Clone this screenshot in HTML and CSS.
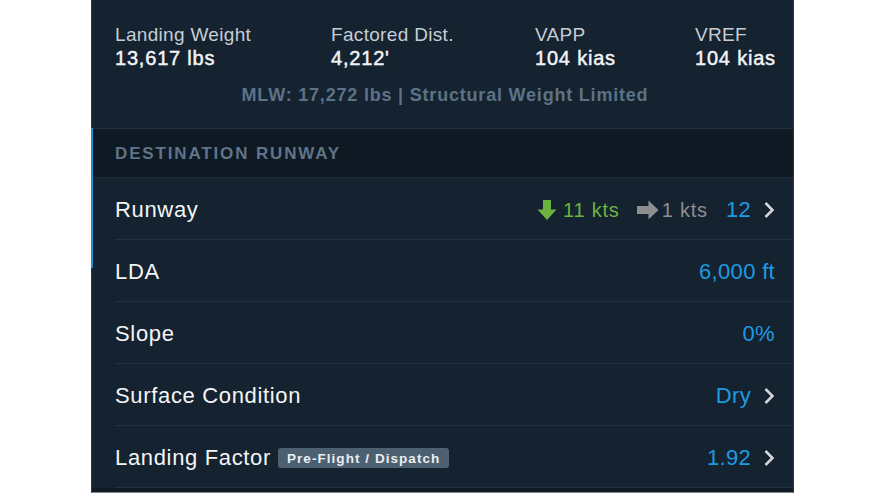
FILE: index.html
```html
<!DOCTYPE html>
<html>
<head>
<meta charset="utf-8">
<link rel="stylesheet" href="styles.css">
</head>
<body>
<div class="panel">
  <div class="accent"></div>
  <section class="stats">
    <div class="stat-grid">
      <div class="stat"><div class="stat-label">Landing Weight</div><div class="stat-value">13,617 lbs</div></div>
      <div class="stat"><div class="stat-label">Factored Dist.</div><div class="stat-value">4,212'</div></div>
      <div class="stat"><div class="stat-label">VAPP</div><div class="stat-value">104 kias</div></div>
      <div class="stat"><div class="stat-label">VREF</div><div class="stat-value">104 kias</div></div>
    </div>
    <div class="mlw">MLW: 17,272 lbs | Structural Weight Limited</div>
  </section>
  <div class="section-header">DESTINATION RUNWAY</div>
  <div class="rows">
    <div class="row">
      <div class="row-label">Runway</div>
      <div class="row-right">
        <span class="wind green">
          <svg class="arrow arrow-down" viewBox="0 0 20 22"><path d="M6 1h8v9.5h5.5l-9.5 10.5-9.5-10.5h5.5z" fill="#6cb23f"/></svg>11 kts</span>
        <span class="wind gray">
          <svg class="arrow arrow-right" viewBox="0 0 23 20"><path d="M1 6h11.5v-5.5l10 9.5-10 9.5v-5.5h-11.5z" fill="#8e8e8e"/></svg>1 kts</span>
        <span class="value">12</span>
        <svg class="chev" viewBox="0 0 12 18"><path d="M2.5 2l7 7-7 7" fill="none" stroke="#d3d7db" stroke-width="2.5"/></svg>
      </div>
    </div>
    <div class="row">
      <div class="row-label">LDA</div>
      <div class="row-right"><span class="value">6,000 ft</span></div>
    </div>
    <div class="row">
      <div class="row-label">Slope</div>
      <div class="row-right"><span class="value">0%</span></div>
    </div>
    <div class="row">
      <div class="row-label">Surface Condition</div>
      <div class="row-right"><span class="value">Dry</span>
        <svg class="chev" viewBox="0 0 12 18"><path d="M2.5 2l7 7-7 7" fill="none" stroke="#d3d7db" stroke-width="2.5"/></svg></div>
    </div>
    <div class="row">
      <div class="row-label">Landing Factor <span class="badge">Pre-Flight / Dispatch</span></div>
      <div class="row-right"><span class="value">1.92</span>
        <svg class="chev" viewBox="0 0 12 18"><path d="M2.5 2l7 7-7 7" fill="none" stroke="#d3d7db" stroke-width="2.5"/></svg></div>
    </div>
  </div>
  <div class="footer-strip"></div>
</div>
</body>
</html>
```
FILE: styles.css
```css
* { box-sizing: border-box; }
html, body { margin: 0; padding: 0; background: #ffffff; }
body {
  font-family: "Liberation Sans", Arial, Helvetica, sans-serif;
  letter-spacing: 0.02em;
  height: 500px;
  overflow: hidden;
}
.panel {
  position: relative;
  margin-left: 91px;
  width: 703px;
  height: 493px;
  background: #152230;
  border-left: 1px solid #2a3847;
  border-right: 1px solid #2a3a49;
  border-bottom: 1px solid #7d868e;
  display: flex;
  flex-direction: column;
}
.accent {
  position: absolute;
  left: -1px;
  top: 128px;
  width: 2px;
  height: 140px;
  background: #1b8fd2;
}
.stats {
  height: 129px;
  padding: 24px 0 0 23px;
  border-bottom: 1px solid #223140;
}
.stat-grid {
  display: grid;
  grid-template-columns: 216px 204px 160px auto;
}
.stat-label {
  font-size: 19px;
  line-height: 22px;
  color: #c6cdd4;
}
.stat-value {
  font-size: 20px;
  line-height: 25px;
  font-weight: 400;
  letter-spacing: 0.04em;
  -webkit-text-stroke: 0.45px currentColor;
  color: #f3f5f7;
}
.mlw {
  margin-top: 14px;
  padding-right: 18px;
  text-align: center;
  font-size: 18px;
  line-height: 21px;
  font-weight: 700;
  color: #5d7286;
  letter-spacing: 0.8px;
}
.section-header {
  height: 49px;
  display: flex;
  align-items: center;
  padding: 2px 0 0 23px;
  background: #0f1923;
  border-bottom: 1px solid #1e2c3a;
  font-size: 17px;
  font-weight: 700;
  letter-spacing: 1.85px;
  color: #5f7488;
}
.rows { margin-left: 23px; }
.row {
  height: 62px;
  display: flex;
  align-items: center;
  justify-content: space-between;
  padding: 3px 18px 0 0;
  border-bottom: 1px solid #223141;
}
.row-label {
  font-size: 22px;
  letter-spacing: 0.03em;
  color: #f3f5f7;
  display: flex;
  align-items: center;
}
.row-right {
  display: flex;
  align-items: center;
}
.value {
  font-size: 22px;
  color: #1d9be2;
}
.wind {
  display: flex;
  align-items: center;
  font-size: 20px;
  letter-spacing: 0.04em;
}
.green { color: #6cb23f; margin-right: 16px; }
.gray { color: #8e8e8e; margin-right: 18px; }
.arrow-down { width: 20px; height: 22px; margin-right: 6px; }
.arrow-right { width: 23px; height: 20px; margin-right: 3px; }
.chev { width: 12px; height: 18px; margin-left: 12px; }
.badge {
  margin-left: 7px;
  height: 20px;
  padding: 0 9px;
  border-radius: 3px;
  background: #4d6072;
  color: #e9edf0;
  font-size: 13.5px;
  font-weight: 700;
  letter-spacing: 1.05px;
  display: inline-flex;
  align-items: center;
}
.footer-strip {
  flex: 1;
  background: #111b26;
}
```
